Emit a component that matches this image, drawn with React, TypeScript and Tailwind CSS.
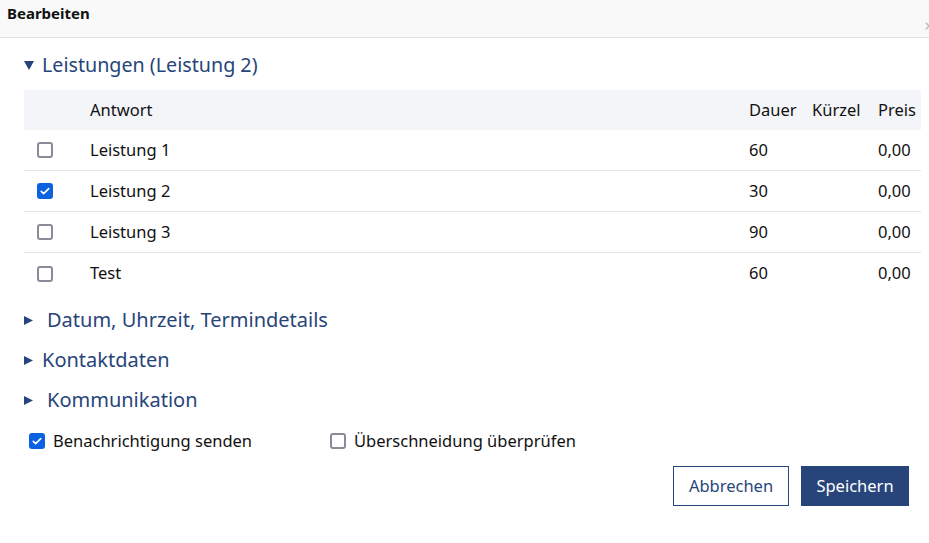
import React from "react";

type Row = { name: string; dauer: string; kuerzel: string; preis: string; checked: boolean };

const rows: Row[] = [
  { name: "Leistung 1", dauer: "60", kuerzel: "", preis: "0,00", checked: false },
  { name: "Leistung 2", dauer: "30", kuerzel: "", preis: "0,00", checked: true },
  { name: "Leistung 3", dauer: "90", kuerzel: "", preis: "0,00", checked: false },
  { name: "Test", dauer: "60", kuerzel: "", preis: "0,00", checked: false },
];

function Check({ checked }: { checked: boolean }) {
  if (checked) {
    return (
      <span className="w-4 h-4 rounded-[3px] bg-[#0b62e0] flex items-center justify-center shrink-0">
        <svg viewBox="0 0 16 16" className="w-3 h-3">
          <path d="M3 8.5l3.2 3L13 4.8" fill="none" stroke="#fff" strokeWidth="2.2" strokeLinecap="round" strokeLinejoin="round" />
        </svg>
      </span>
    );
  }
  return <span className="w-4 h-4 rounded-[3px] border-2 border-[#8a8a99] bg-white shrink-0" />;
}

function Arrow({ open }: { open?: boolean }) {
  return open ? (
    <svg viewBox="0 0 10 9" className="w-[10px] h-[9px]">
      <path d="M0 0h10L5 9z" fill="#27457a" />
    </svg>
  ) : (
    <svg viewBox="0 0 9 9" className="w-[9px] h-[9px]">
      <path d="M0 0l9 4.5L0 9z" fill="#27457a" />
    </svg>
  );
}

function Section({ title, pad }: { title: string; pad: string }) {
  return (
    <div className="flex items-center h-10">
      <Arrow />
      <span className={`${pad} text-[20px] text-[#27457a]`}>{title}</span>
    </div>
  );
}

export default function App() {
  return (
    <div className="w-[929px] h-[543px] bg-white overflow-hidden text-[#111] font-['Noto_Sans',sans-serif]">
      {/* header */}
      <div className="h-[38px] bg-[#f9f9f9] border-b border-[#e3e3e3] flex items-start justify-between pl-[7px]">
        <span className="text-[15px] font-bold mt-[2px]">Bearbeiten</span>
        {/* close icon, pushed half out of the frame */}
        <svg viewBox="0 0 10 10" className="w-[8px] h-[8px] mt-[22px] mr-[-4px]">
          <path d="M1 1l8 8M9 1l-8 8" stroke="#b8b8b8" strokeWidth="1.6" />
        </svg>
      </div>

      <div className="pl-6 pr-2 pt-[14px]">
        <div className="flex items-center h-[26px]">
          <Arrow open />
          <span className="pl-2 text-[19.7px] text-[#27457a]">Leistungen (Leistung 2)</span>
        </div>

        {/* services table */}
        <div className="mt-[12px] text-[16.5px]">
          <div className="grid grid-cols-[66px_1fr_63px_66px_43px] h-10 items-center bg-[#f4f5f9]">
            <span />
            <span>Antwort</span>
            <span>Dauer</span>
            <span>Kürzel</span>
            <span>Preis</span>
          </div>
          {rows.map((r, i) => (
            <div
              key={r.name}
              className={`grid grid-cols-[66px_1fr_63px_66px_43px] h-[41px] items-center ${i < rows.length - 1 ? "border-b border-[#e4e4e4]" : ""}`}
            >
              <span className="pl-[13px] flex">
                <Check checked={r.checked} />
              </span>
              <span>{r.name}</span>
              <span>{r.dauer}</span>
              <span>{r.kuerzel}</span>
              <span>{r.preis}</span>
            </div>
          ))}
        </div>

        <div className="mt-[6px]">
          <Section title="Datum, Uhrzeit, Termindetails" pad="pl-[14px]" />
          <Section title="Kontaktdaten" pad="pl-[9px]" />
          <Section title="Kommunikation" pad="pl-[14px]" />
        </div>

        <div className="flex items-center h-8 text-[16.5px] pl-[5px] mt-[5px]">
          <label className="flex items-center gap-2 w-[301px]">
            <Check checked />
            <span>Benachrichtigung senden</span>
          </label>
          <label className="flex items-center gap-2">
            <Check checked={false} />
            <span>Überschneidung überprüfen</span>
          </label>
        </div>

        <div className="flex justify-end gap-3 mt-[9px] pr-[12px] text-[16.5px]">
          <button className="h-10 w-[116px] border border-[#27457a] text-[#27457a] bg-white">Abbrechen</button>
          <button className="h-10 w-[108px] bg-[#27457a] text-white">Speichern</button>
        </div>
      </div>
    </div>
  );
}
